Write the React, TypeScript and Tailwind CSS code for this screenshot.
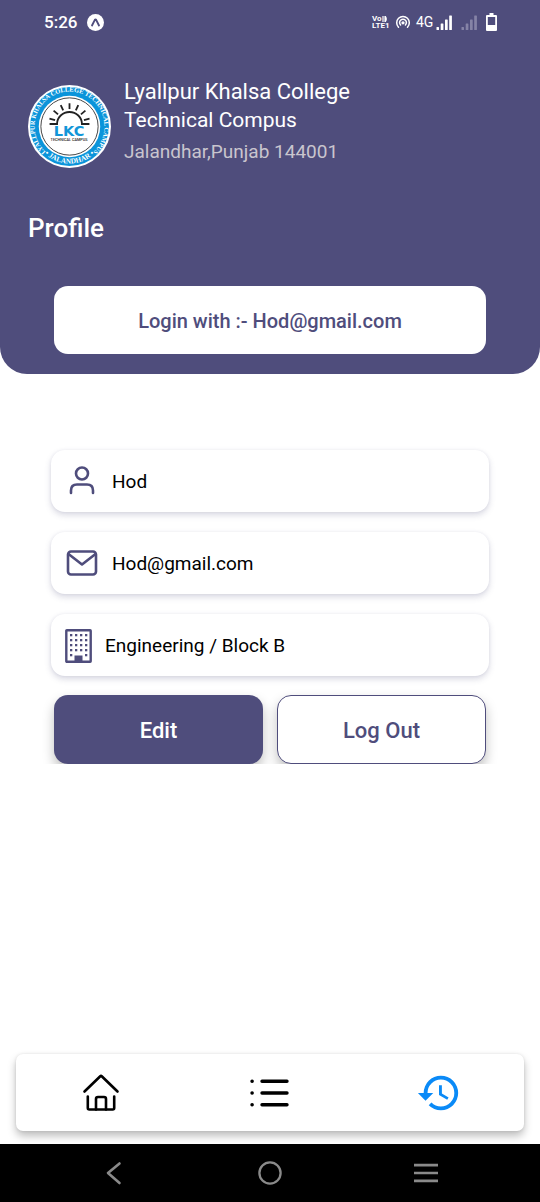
import type { ReactNode } from "react";

const SUN_RAYS = [-75, -50, -25, 0, 25, 50, 75];

function CollegeLogo() {
  return (
    <svg viewBox="0 0 100 100" className="size-[83px] shrink-0" role="img" aria-label="LKC Technical Campus">
      <defs>
        <path id="ringTop" d="M19.900 79.200 A42 42 0 1 1 80.100 79.200" />
        <path id="ringBottom" d="M18 81 A44.500 44.500 0 0 0 82 81" />
      </defs>
      <circle cx="50" cy="50" r="50" fill="#fff" />
      <circle cx="50" cy="50" r="47.5" fill="#0b94da" />
      <circle cx="50" cy="50" r="37" fill="#fff" />
      <circle cx="50" cy="50" r="34.500" fill="none" stroke="#222" strokeWidth="1" />
      <g fill="#fff" fontFamily="Liberation Serif, serif" fontWeight="700">
        <text fontSize="7.800">
          <textPath href="#ringTop" startOffset="50%" textAnchor="middle">
            LYALLPUR KHALSA COLLEGE TECHNICAL CAMPUS
          </textPath>
        </text>
        <text fontSize="8.800">
          <textPath href="#ringBottom" startOffset="50%" textAnchor="middle">
            • JALANDHAR •
          </textPath>
        </text>
      </g>
      <path d="M26 47h9a15 14.500 0 0 1 30 0h9" fill="none" stroke="#222" strokeWidth="2.200" />
      <g stroke="#222" strokeWidth="2.200">
        {SUN_RAYS.map((angle) => (
          <line key={angle} x1="50" y1="29" x2="50" y2="22" transform={`rotate(${angle} 50 47)`} />
        ))}
      </g>
      <text x="49.500" y="61.500" textAnchor="middle" fontFamily="DejaVu Sans, sans-serif" fontWeight="700" fontSize="17.500" fill="#1296d8">
        LKC
      </text>
      <text x="49.500" y="68" textAnchor="middle" fontFamily="Roboto, sans-serif" fontWeight="500" fontSize="4.600" fill="#222">
        TECHNICAL CAMPUS
      </text>
    </svg>
  );
}

function Signal({ className }: { className: string }) {
  return (
    <svg viewBox="0 0 17 15" className={`h-[15px] w-[17px] ${className}`} fill="currentColor" aria-hidden="true">
      <rect x="0.500" y="12" width="2.500" height="3" rx="0.500" />
      <rect x="4.700" y="8.500" width="2.700" height="6.500" rx="0.500" />
      <rect x="9" y="4.500" width="2.700" height="10.500" rx="0.500" />
      <rect x="13.200" y="0.500" width="2.700" height="14.500" rx="0.500" />
    </svg>
  );
}

function StatusBar() {
  return (
    <div className="flex h-11 items-center justify-between pr-[43px] pl-11">
      <div className="flex items-center gap-2.5">
        <span className="text-[17px] leading-5 font-medium">5:26</span>
        <svg viewBox="0 0 18 18" className="size-[17px]" aria-hidden="true">
          <circle cx="9" cy="9" r="9" fill="#fff" />
          <path d="M5.300 12.200 8.300 6.200q.7-1.100 1.400 0l3 6" fill="none" stroke="#4f4d7c" strokeWidth="2" strokeLinecap="round" />
        </svg>
      </div>
      <div className="flex items-center">
        <div className="flex w-5 flex-col text-[8px] leading-[7px] font-bold">
          <span className="flex items-center">
            Vo
            <svg viewBox="0 0 6 6" className="size-1.5" fill="none" stroke="#fff" strokeWidth="1.200" aria-hidden="true">
              <path d="M1 0v6M3 0q2.500 3 0 6M3 0v6" />
            </svg>
          </span>
          <span>LTE1</span>
        </div>
        <svg viewBox="0 0 16 14" className="ml-[3px] h-3.5 w-4" fill="none" stroke="#fff" strokeWidth="1.500" strokeLinecap="round" aria-hidden="true">
          <path d="M3.500 12.200a6.300 6.300 0 1 1 9 0" />
          <path d="M5.600 10a3.400 3.400 0 1 1 4.800 0" />
          <circle cx="8" cy="7.800" r="0.900" fill="#fff" />
        </svg>
        <span className="ml-[5px] w-5 text-sm leading-5">4G</span>
        <Signal className="text-white" />
        <Signal className="ml-2 text-[#8583a6]" />
        <svg viewBox="0 0 11 18" className="ml-2 h-[18px] w-[11px]" aria-hidden="true">
          <path d="M3.500 0h4v2H10q1 0 1 1v14q0 1-1 1H1q-1 0-1-1V3q0-1 1-1h2.500z" fill="#fff" />
          <rect x="1.800" y="4" width="7.400" height="8" fill="#4f4d7c" />
        </svg>
      </div>
    </div>
  );
}

function InfoCard({ icon, children }: { icon: ReactNode; children: ReactNode }) {
  return (
    <li className="flex h-[62px] items-center rounded-[14px] bg-white pt-0.5 pl-[14px] text-[19px] text-black shadow-[0_3px_6px_rgba(79,77,124,0.22),0_0_3px_rgba(79,77,124,0.08)]">
      {icon}
      {children}
    </li>
  );
}

function BuildingIcon() {
  const rows = [6, 11, 16, 21, 26];
  const columns = [5, 10, 15, 20];
  return (
    <svg viewBox="0 0 27 34" className="mr-[13px] h-[34px] w-[27px]" aria-hidden="true">
      <rect x="1.300" y="1.300" width="24.400" height="31.400" rx="0.500" fill="none" stroke="#4f4d7c" strokeWidth="2.400" />
      {rows.map((y) =>
        columns
          .filter((x) => y < 26 || x === 5 || x === 20)
          .map((x) => <rect key={`${x}-${y}`} x={x} y={y - 1} width="2.300" height="2.300" fill="#4f4d7c" />),
      )}
      <rect x="9.500" y="26.500" width="8" height="6" fill="#4f4d7c" />
    </svg>
  );
}

export default function App() {
  return (
    <div className="flex min-h-screen flex-col bg-white font-[Roboto,sans-serif]">
      <header className="rounded-b-[27px] bg-[#4f4d7c] pb-5 text-white">
        <StatusBar />
        <div className="mt-[33px] flex items-start gap-[13px] px-7">
          <div className="pt-2">
            <CollegeLogo />
          </div>
          <div>
            <p className="text-[22px] leading-[29px]">Lyallpur Khalsa College</p>
            <p className="text-[21px] leading-[29px]">Technical Compus</p>
            <p className="mt-[3px] text-[19px] leading-[27px] text-[#c9c5ce]">Jalandhar,Punjab 144001</p>
          </div>
        </div>
        <h1 className="mt-11 px-7 text-[26px] leading-8 font-medium">Profile</h1>
        <div className="mx-[54px] mt-[42px] flex h-[68px] items-center justify-center rounded-[14px] bg-white pt-0.5">
          <p className="text-[20px] leading-6 font-medium text-[#4f4d7c]">Login with :- Hod@gmail.com</p>
        </div>
      </header>

      <main className="flex-1 pt-[76px]">
        <ul className="flex flex-col gap-5 px-[51px]">
          <InfoCard
            icon={
              <svg viewBox="0 0 34 34" className="mr-[13px] size-[34px]" fill="none" stroke="#4f4d7c" strokeWidth="2.600" strokeLinecap="round" aria-hidden="true">
                <circle cx="17" cy="8.500" r="6" />
                <path d="M6 28v-2.500q0-6 6-6h10q6 0 6 6V28" />
              </svg>
            }
          >
            Hod
          </InfoCard>
          <InfoCard
            icon={
              <svg viewBox="0 0 34 34" className="mr-[13px] size-[34px]" fill="none" stroke="#4f4d7c" strokeWidth="2.600" strokeLinecap="round" strokeLinejoin="round" aria-hidden="true">
                <rect x="3" y="4.500" width="28" height="23" rx="3" />
                <path d="M3.500 7 17 17.500 30.500 7" />
              </svg>
            }
          >
            Hod@gmail.com
          </InfoCard>
          <InfoCard icon={<BuildingIcon />}>Engineering / Block B</InfoCard>
        </ul>
        <div className="grid grid-cols-2 gap-[14px] overflow-hidden px-[54px] pt-[19px] text-[22px] font-medium">
          <button type="button" className="h-[69px] rounded-[14px] bg-[#4f4d7c] pt-0.5 text-white shadow-[0_6px_12px_rgba(0,0,0,0.25)]">
            Edit
          </button>
          <button type="button" className="h-[69px] rounded-[14px] border border-[#4f4d7c] bg-white pt-0.5 text-[#4f4d7c] shadow-[0_6px_12px_rgba(0,0,0,0.25)]">
            Log Out
          </button>
        </div>
      </main>

      <nav aria-label="Main" className="mx-4 mb-[13px] grid h-[77px] grid-cols-3 rounded-[7px] bg-white shadow-[0_5px_8px_rgba(0,0,0,0.26),0_0_3px_rgba(0,0,0,0.1)]">
        <a href="#home" aria-label="Home" className="flex items-center justify-center">
          <svg viewBox="0 0 40 40" className="size-10" fill="none" stroke="#000" strokeWidth="2.600" strokeLinecap="round" strokeLinejoin="round" aria-hidden="true">
            <path d="M3.500 18.500 19 3.500q1-1 2 0l15.500 15" />
            <path d="M6.800 23.500v11.500q0 1.500 1.500 1.500h23.400q1.500 0 1.500-1.500V23.500" />
            <path d="M15 36.500V26q0-2 2-2h6q2 0 2 2V36.500" />
          </svg>
        </a>
        <a href="#list" aria-label="List" className="flex items-center justify-center">
          <svg viewBox="0 0 40 40" className="size-10" fill="none" stroke="#000" strokeWidth="3.400" strokeLinecap="round" aria-hidden="true">
            <path d="M2 8.200h.2M2 20h.2M2 31.800h.2M12 8.200h25M12 20h25M12 31.800h25" />
          </svg>
        </a>
        <a href="#history" aria-label="History" className="flex items-center justify-center">
          <svg viewBox="0 0 24 24" className="size-[46px]" fill="#0a8af7" aria-hidden="true">
            <path d="M13.500 8H12v5l4.280 2.540.720-1.210-3.500-2.080V8M13 3a9 9 0 0 0-9 9H1l3.960 4.030L9 12H6a7 7 0 0 1 7-7 7 7 0 0 1 7 7 7 7 0 0 1-7 7c-1.930 0-3.680-.790-4.940-2.070L6.640 18.360A8.970 8.970 0 0 0 13 21a9 9 0 0 0 9-9 9 9 0 0 0-9-9" />
          </svg>
        </a>
      </nav>

      <footer className="flex h-[58px] items-center justify-between bg-black px-[102px]">
        <button type="button" aria-label="Back">
          <svg viewBox="0 0 24 24" className="size-6" fill="none" stroke="#8a8a8a" strokeWidth="2.600" strokeLinecap="round" strokeLinejoin="round" aria-hidden="true">
            <path d="M17.500 2.500 6 12l11.500 10" />
          </svg>
        </button>
        <button type="button" aria-label="Home screen">
          <svg viewBox="0 0 24 24" className="size-6" fill="none" stroke="#8a8a8a" strokeWidth="2.300" aria-hidden="true">
            <circle cx="12" cy="12" r="10.600" />
          </svg>
        </button>
        <button type="button" aria-label="Recent apps">
          <svg viewBox="0 0 24 24" className="size-6" fill="none" stroke="#8a8a8a" strokeWidth="2.700" aria-hidden="true">
            <path d="M0 4.200h24M0 12h24M0 19.800h24" />
          </svg>
        </button>
      </footer>
    </div>
  );
}
